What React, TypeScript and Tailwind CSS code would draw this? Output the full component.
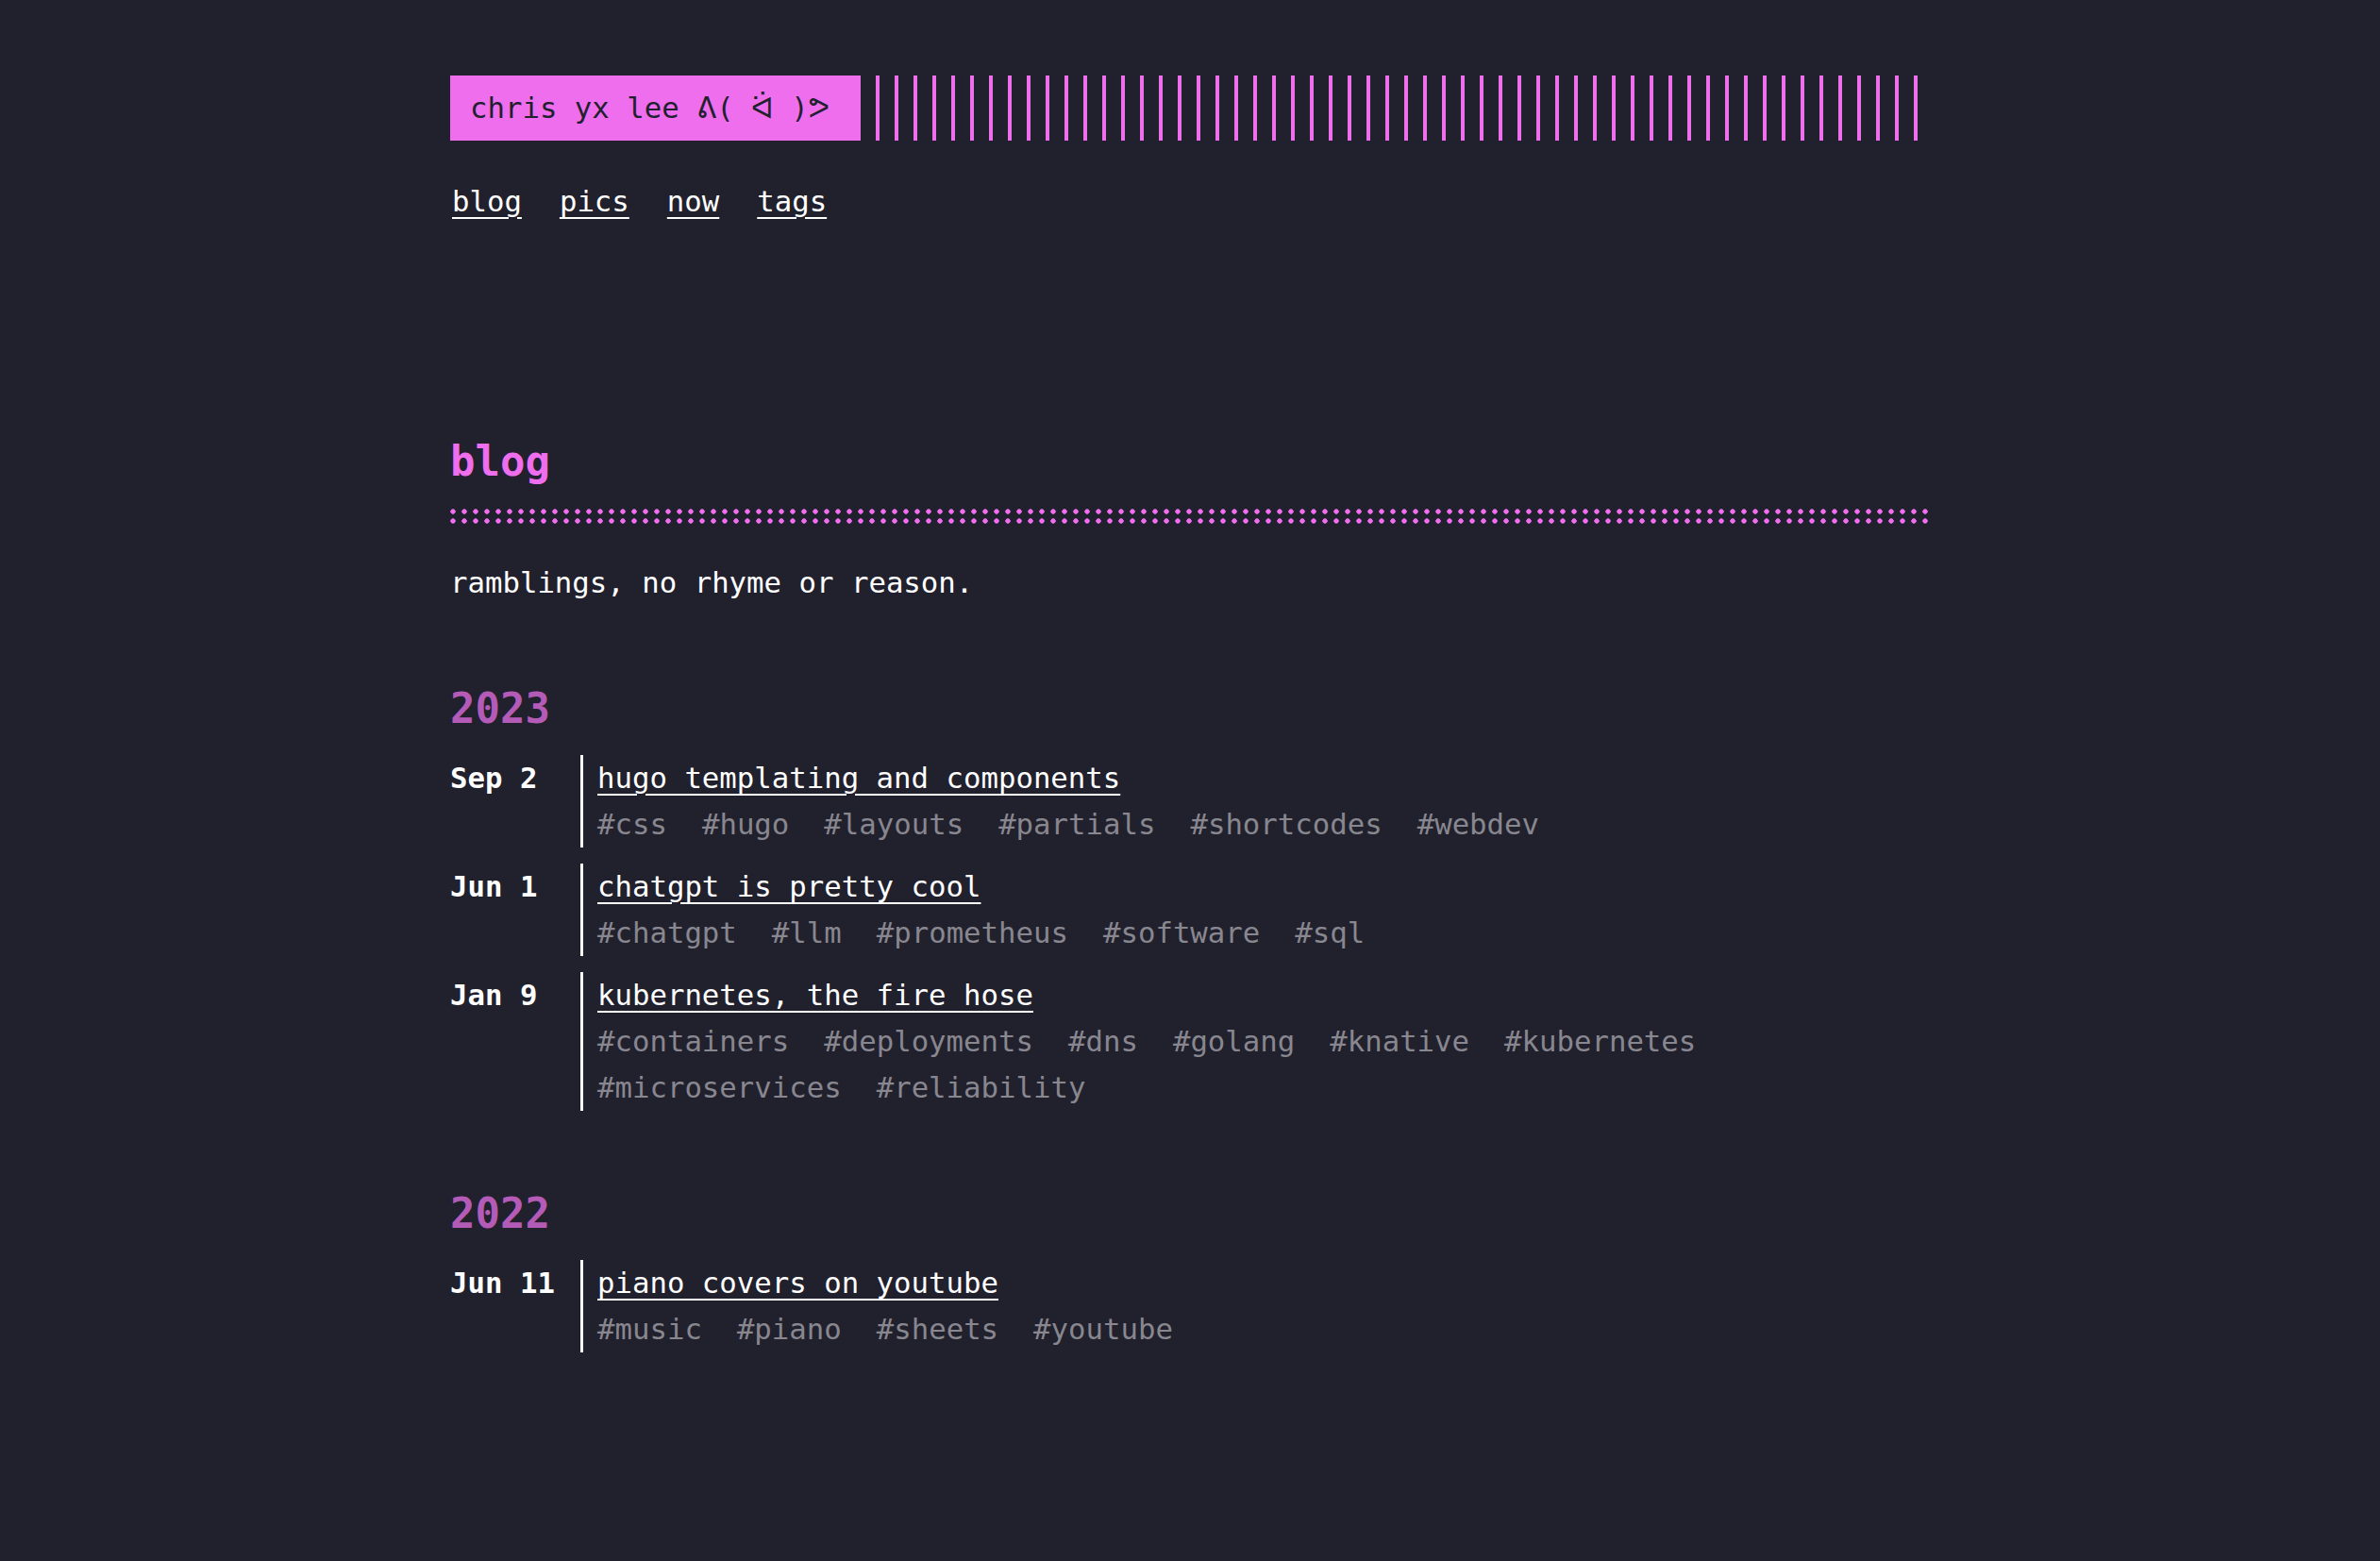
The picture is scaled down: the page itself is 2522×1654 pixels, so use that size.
import React from "react";

interface Post {
  date: string;
  title: string;
  tags: string[];
}

interface YearGroup {
  year: string;
  posts: Post[];
}

const groups: YearGroup[] = [
  {
    year: "2023",
    posts: [
      {
        date: "Sep 2",
        title: "hugo templating and components",
        tags: ["css", "hugo", "layouts", "partials", "shortcodes", "webdev"],
      },
      {
        date: "Jun 1",
        title: "chatgpt is pretty cool",
        tags: ["chatgpt", "llm", "prometheus", "software", "sql"],
      },
      {
        date: "Jan 9",
        title: "kubernetes, the fire hose",
        tags: [
          "containers",
          "deployments",
          "dns",
          "golang",
          "knative",
          "kubernetes",
          "microservices",
          "reliability",
        ],
      },
    ],
  },
  {
    year: "2022",
    posts: [
      {
        date: "Jun 11",
        title: "piano covers on youtube",
        tags: ["music", "piano", "sheets", "youtube"],
      },
    ],
  },
];

const mono = "font-['DejaVu_Sans_Mono','DejaVu_Sans',monospace]";

function Header() {
  return (
    <header>
      <div className="flex h-[69px]">
        <a
          href="#"
          className="flex w-[435px] flex-shrink-0 items-center bg-[#ee6eee] pl-[21px] text-[#21202d] whitespace-nowrap"
        >
          chris yx lee ᕕ( ᐛ )ᕗ
        </a>
        <div className="ml-[16px] flex-1 bg-[repeating-linear-gradient(90deg,#ee6eee_0px,#ee6eee_4px,transparent_4px,transparent_20px)]" />
      </div>
      <nav className="mt-[40px] flex gap-[40px] pl-[2px]">
        {["blog", "pics", "now", "tags"].map((item) => (
          <a
            key={item}
            href="#"
            className="text-white underline decoration-2 underline-offset-[6px]"
          >
            {item}
          </a>
        ))}
      </nav>
    </header>
  );
}

function PostRow({ post }: { post: Post }) {
  return (
    <li className="flex">
      <div className="w-[138px] flex-shrink-0 font-bold text-white">
        {post.date}
      </div>
      <div className="flex-1 border-l-[3px] border-white pl-[15px]">
        <a
          href="#"
          className="text-white underline decoration-2 underline-offset-[6px]"
        >
          {post.title}
        </a>
        <div className="flex flex-wrap gap-x-[37px] text-[#88878f]">
          {post.tags.map((tag) => (
            <a key={tag} href="#">
              #{tag}
            </a>
          ))}
        </div>
      </div>
    </li>
  );
}

export default function App() {
  return (
    <div
      className={`min-h-screen bg-[#21202d] text-[30.7px] leading-[49px] text-white ${mono}`}
    >
      <div className="mx-auto w-[1568px] pt-[80px] pb-[120px]">
        <Header />

        <main className="mt-[224px]">
          <h1 className="text-[44px] leading-[53px] font-bold text-[#ee6eee]">
            blog
          </h1>
          <div className="mt-[22px] h-[20px] bg-[radial-gradient(circle_at_3px_5px,#ee6eee_2.4px,transparent_3px)] bg-[length:12px_10px]" />
          <p className="mt-[36px]">ramblings, no rhyme or reason.</p>

          {groups.map((group) => (
            <section key={group.year} className="mt-[82px]">
              <h2 className="text-[44px] leading-[53px] font-bold text-[#b45bb8]">
                {group.year}
              </h2>
              <ul className="mt-[23px] flex flex-col gap-[17px]">
                {group.posts.map((post) => (
                  <PostRow key={post.title} post={post} />
                ))}
              </ul>
            </section>
          ))}
        </main>
      </div>
    </div>
  );
}
